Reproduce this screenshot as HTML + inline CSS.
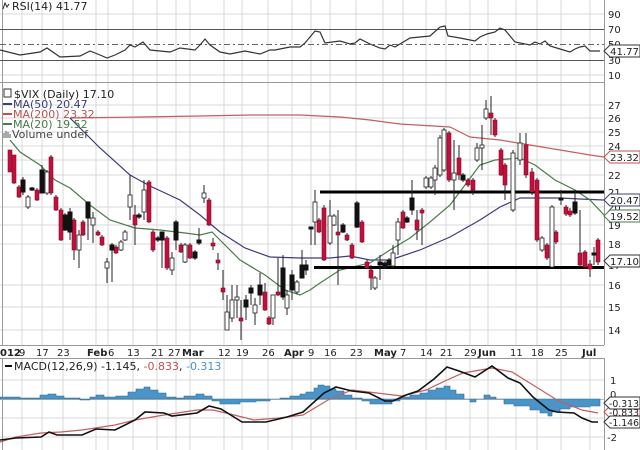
<!DOCTYPE html>
<html><head><meta charset="utf-8"><style>
html,body{margin:0;padding:0;background:#fff;width:640px;height:450px;overflow:hidden}
svg{display:block}
text{font-family:"DejaVu Sans","Liberation Sans",sans-serif;font-size:11px}
.ax{font-size:10px}
</style></head><body>
<svg width="640" height="450" viewBox="0 0 640 450" xmlns="http://www.w3.org/2000/svg">
<g stroke="#d9d9d9" stroke-width="1">
<path d="M22 0V345M42 0V345M63 0V345M96 0V345M108 0V345M133 0V345M157 0V345M176 0V345M190 0V345M224 0V345M242 0V345M268 0V345M292 0V345M311 0V345M330 0V345M356 0V345M383 0V345M403 0V345M426 0V345M446 0V345M470 0V345M488 0V345M516 0V345M537 0V345M561 0V345M590 0V345"/>
<path d="M22 358V450M42 358V450M63 358V450M96 358V450M108 358V450M133 358V450M157 358V450M176 358V450M190 358V450M224 358V450M242 358V450M268 358V450M292 358V450M311 358V450M330 358V450M356 358V450M383 358V450M403 358V450M426 358V450M446 358V450M470 358V450M488 358V450M516 358V450M537 358V450M561 358V450M590 358V450"/>
<path d="M0 14H604M0 75H604M0 105H604M0 118H604M0 132H604M0 146H604M0 160H604M0 175H604M0 207H604M0 225H604M0 244H604M0 285H604M0 307H604M0 330H604M0 380H604M0 418H604M0 437H604"/>
</g>
<g stroke="#999" fill="none">
<path d="M2.5 0V345M604.5 0V345M0 82.5H604M0 345.5H604M2.5 358V450M604.5 358V450M0 358.5H604"/>
</g>
<path d="M0 29.5H604M0 60.5H604" stroke="#555" stroke-width="1"/>
<path d="M0 44.5H604" stroke="#666" stroke-dasharray="6,3,2,3"/>
<polyline fill="none" stroke="#333" stroke-width="1.2" points="0,50 20,55 40,52 47,48 60,57 80,56 90,51 100,55 107,58 115,55 125,50 130,45 135,47 143,42 150,50 170,52 180,48 195,50 200,45 205,39 210,45 220,52 230,54 245,51 260,54 270,50 275,50 290,47 300,47 305,43 315,31 320,32 325,43 340,41 350,44 355,43 360,39 370,44 380,48 385,49 390,45 395,47 400,44 410,38 430,36 440,27 445,26 448,36 460,38 475,41 480,37 487,34 495,32 500,28 505,30 515,42 530,45 535,42 540,44 545,41 550,46 560,49 570,52 575,49 580,47 585,46 590,51 600,51"/>
<g fill="#222">
<text x="12" y="10">RSI(14) 41.77</text>
<g class="ax"><text x="608" y="18" class="ax">90</text><text x="608" y="33" class="ax">70</text><text x="608" y="48" class="ax">50</text><text x="608" y="64" class="ax">30</text><text x="608" y="79" class="ax">10</text></g>
</g>
<path d="M3 9l2-6 2 4 2-3" stroke="#222" fill="none"/>
<path d="M604 51l6-6h30v12h-30z" fill="#fff" stroke="#333"/><text x="610" y="55" fill="#222" class="ax" textLength="29" lengthAdjust="spacingAndGlyphs">41.77</text>
<g fill="#222">
<text class="ax" x="608" y="109">27</text><text class="ax" x="608" y="122">26</text><text class="ax" x="608" y="136">25</text><text class="ax" x="608" y="150">24</text><text class="ax" x="608" y="179">22</text><text class="ax" x="608" y="196">21</text><text class="ax" x="608" y="211">20</text><text class="ax" x="608" y="229">19</text><text class="ax" x="608" y="248">18</text><text class="ax" x="608" y="269">17</text><text class="ax" x="608" y="289">16</text><text class="ax" x="608" y="311">15</text><text class="ax" x="608" y="334">14</text>
</g>
<polyline fill="none" stroke="#c06060" stroke-width="1.2" points="70,118 140,117 200,116 250,115 300,115 340,117 370,120 400,124 450,127 470,137 500,140 530,145 560,150 590,155 604,157"/>
<polyline fill="none" stroke="#3c3c78" stroke-width="1.2" points="70,118 100,148 130,175 150,186 180,200 200,215 220,232 245,248 270,257 300,258 330,258 350,256 370,260 390,260 420,250 450,237 480,220 500,207 520,198 535,198 560,198 580,199 604,200"/>
<polyline fill="none" stroke="#4a7a4a" stroke-width="1.2" points="10,140 20,152 40,165 55,180 70,188 90,205 110,220 135,228 160,230 185,233 200,235 212,232 220,240 240,260 265,275 285,290 300,295 310,290 320,283 340,270 370,263 390,250 410,238 430,222 450,205 465,185 480,165 495,160 520,158 535,165 555,180 575,190 590,200 604,215"/>
<path d="M320 192H604M314 267.5H604" stroke="#000" stroke-width="3"/>
<g stroke="#222" stroke-width="1">
<path d="M10 150V172M14 155V184M19 185V198M23 177V195M28 195V209M32 187V191M37 188V201M42 165V193M47 170V195M51 155V195M56 195V211M61 208V241M65 213V231M70 208V240M74 218V260M79 230V268M83 220V236M88 203V240M93 212V243M98 230V236M102 235V246M107 258V283M112 243V282M116 245V254M121 240V251M125 230V241M130 175V220M135 205V245M139 213V219M144 180V220M149 180V223M153 230V252M158 236V242M162 233V268M167 236V270M172 252V275M176 220V250M181 243V253M185 243V263M190 243V259M195 250V260M199 228V245M204 185V203M209 198V226M213 238V250M218 253V270M223 270V300M227 295V330M232 285V322M237 285V318M241 300V340M246 295V320M251 285V305M255 298V325M260 273V305M265 283V311M269 316V325M273 295V325M278 258V296M283 255V300M287 290V315M292 270V300M297 280V294M302 250V278M306 260V275M311 227V245M315 190V245M319 218V233M324 205V261M330 200V245M334 214V226M338 210V285M343 223V233M347 233V241M352 243V259M357 201V228M362 220V243M367 260V269M371 265V290M375 276V290M380 255V280M385 261V269M389 258V266M393 245V268M398 218V255M403 210V229M407 216V223M412 180V215M417 210V240M422 208V245M426 176V189M431 176V189M435 165V195M440 135V177M444 128V172M449 131V182M454 140V210M459 145V180M463 173V182M468 178V187M473 178V195M477 143V162M482 125V170M486 100V120M491 96V135M495 118V137M501 148V176M505 163V200M513 150V212M520 133V165M526 133V178M532 168V195M537 178V242M542 236V252M547 243V260M552 205V268M556 230V244M561 190V205M566 205V216M570 208V217M575 190V215M580 210V267M585 250V269M590 260V277M594 247V265M598 238V265"/>
</g>
<g fill="#c0103c" stroke="#8a0a2a" stroke-width="0.6">
<rect x="8" y="150" width="4" height="22"/><rect x="12" y="155" width="4" height="28"/><rect x="17" y="187" width="4" height="10"/><rect x="35" y="190" width="4" height="10"/><rect x="49" y="157" width="4" height="36"/><rect x="54" y="197" width="4" height="13"/><rect x="59" y="210" width="4" height="30"/><rect x="72" y="220" width="4" height="30"/><rect x="81" y="222" width="4" height="13"/><rect x="96" y="232" width="4" height="3"/><rect x="100" y="237" width="4" height="8"/><rect x="114" y="247" width="4" height="6"/><rect x="133" y="215" width="4" height="10"/><rect x="147" y="182" width="4" height="40"/><rect x="151" y="232" width="4" height="18"/><rect x="165" y="238" width="4" height="30"/><rect x="179" y="245" width="4" height="7"/><rect x="188" y="245" width="4" height="13"/><rect x="207" y="200" width="4" height="25"/><rect x="211" y="243" width="4" height="3"/><rect x="216" y="260" width="4" height="3"/><rect x="221" y="288" width="4" height="4"/><rect x="239" y="318" width="4" height="3"/><rect x="263" y="292" width="4" height="18"/><rect x="267" y="318" width="4" height="6"/><rect x="276" y="292" width="4" height="3"/><rect x="317" y="220" width="4" height="12"/><rect x="322" y="208" width="4" height="52"/><rect x="336" y="232" width="4" height="3"/><rect x="345" y="235" width="4" height="5"/><rect x="350" y="245" width="4" height="13"/><rect x="360" y="222" width="4" height="20"/><rect x="365" y="262" width="4" height="6"/><rect x="369" y="270" width="4" height="8"/><rect x="401" y="212" width="4" height="16"/><rect x="415" y="220" width="4" height="10"/><rect x="420" y="210" width="4" height="3"/><rect x="447" y="133" width="4" height="47"/><rect x="457" y="158" width="4" height="17"/><rect x="466" y="180" width="4" height="5"/><rect x="471" y="180" width="4" height="10"/><rect x="489" y="113" width="4" height="5"/><rect x="493" y="120" width="4" height="15"/><rect x="499" y="150" width="4" height="25"/><rect x="503" y="165" width="4" height="20"/><rect x="524" y="145" width="4" height="30"/><rect x="530" y="172" width="4" height="20"/><rect x="535" y="180" width="4" height="60"/><rect x="545" y="245" width="4" height="13"/><rect x="554" y="232" width="4" height="10"/><rect x="564" y="207" width="4" height="7"/><rect x="568" y="211" width="4" height="4"/><rect x="578" y="253" width="4" height="12"/><rect x="583" y="252" width="4" height="15"/><rect x="588" y="264" width="4" height="5"/><rect x="596" y="240" width="4" height="22"/>
</g>
<g fill="#fff" stroke="#222" stroke-width="0.8">
<rect x="26" y="197" width="4" height="10"/><rect x="45" y="172" width="4" height="21"/><rect x="77" y="235" width="4" height="15"/><rect x="91" y="218" width="4" height="7"/><rect x="105" y="262" width="4" height="6"/><rect x="119" y="242" width="4" height="8"/><rect x="123" y="232" width="4" height="8"/><rect x="128" y="195" width="4" height="12"/><rect x="142" y="190" width="4" height="22"/><rect x="170" y="258" width="4" height="12"/><rect x="183" y="245" width="4" height="17"/><rect x="202" y="193" width="4" height="5"/><rect x="225" y="312" width="4" height="18"/><rect x="230" y="300" width="4" height="18"/><rect x="235" y="297" width="4" height="3"/><rect x="253" y="305" width="4" height="8"/><rect x="271" y="295" width="4" height="23"/><rect x="285" y="295" width="4" height="13"/><rect x="295" y="282" width="4" height="10"/><rect x="313" y="202" width="4" height="20"/><rect x="328" y="216" width="4" height="27"/><rect x="332" y="216" width="4" height="9"/><rect x="373" y="278" width="4" height="10"/><rect x="391" y="253" width="4" height="13"/><rect x="396" y="222" width="4" height="18"/><rect x="424" y="178" width="4" height="9"/><rect x="429" y="178" width="4" height="9"/><rect x="433" y="168" width="4" height="12"/><rect x="438" y="138" width="4" height="37"/><rect x="442" y="130" width="4" height="40"/><rect x="452" y="173" width="4" height="7"/><rect x="475" y="148" width="4" height="12"/><rect x="480" y="145" width="4" height="3"/><rect x="484" y="109" width="4" height="9"/><rect x="511" y="153" width="4" height="57"/><rect x="518" y="143" width="4" height="17"/><rect x="540" y="238" width="4" height="12"/><rect x="550" y="207" width="4" height="60"/>
</g>
<g fill="#111" stroke="#111">
<rect x="21" y="180" width="4" height="12"/><rect x="30" y="188" width="4" height="2"/><rect x="40" y="170" width="4" height="23"/><rect x="63" y="215" width="4" height="15"/><rect x="68" y="212" width="4" height="20"/><rect x="86" y="202" width="4" height="16"/><rect x="110" y="245" width="4" height="5"/><rect x="137" y="215" width="4" height="2"/><rect x="156" y="238" width="4" height="2"/><rect x="160" y="232" width="4" height="8"/><rect x="174" y="222" width="4" height="18"/><rect x="193" y="252" width="4" height="6"/><rect x="197" y="240" width="4" height="3"/><rect x="244" y="300" width="4" height="7"/><rect x="249" y="288" width="4" height="5"/><rect x="258" y="285" width="4" height="10"/><rect x="281" y="268" width="4" height="29"/><rect x="290" y="275" width="4" height="15"/><rect x="300" y="265" width="4" height="13"/><rect x="304" y="265" width="4" height="5"/><rect x="309" y="227" width="4" height="2"/><rect x="341" y="225" width="4" height="7"/><rect x="355" y="203" width="4" height="24"/><rect x="378" y="262" width="4" height="3"/><rect x="383" y="263" width="4" height="5"/><rect x="387" y="260" width="4" height="5"/><rect x="405" y="218" width="4" height="4"/><rect x="410" y="198" width="4" height="12"/><rect x="461" y="175" width="4" height="5"/><rect x="559" y="198" width="4" height="2"/><rect x="573" y="202" width="4" height="11"/><rect x="592" y="253" width="4" height="2"/>
</g>
<g stroke-width="1" fill="#fff">
<path d="M604 157l6-6h30v12h-30z" stroke="#c05050"/>
<path d="M604 200l6-6h30v12h-30z" stroke="#3c3c78"/>
<path d="M604 216l6-6h30v12h-30z" stroke="#4a7a4a"/>
<path d="M604 261l6-6h30v12h-30z" stroke="#333"/>
</g>
<g fill="#222" class="ax"><text class="ax" x="610" y="161" textLength="29" lengthAdjust="spacingAndGlyphs">23.32</text><text class="ax" x="610" y="204" textLength="29" lengthAdjust="spacingAndGlyphs">20.47</text><text class="ax" x="610" y="220" textLength="29" lengthAdjust="spacingAndGlyphs">19.52</text><text class="ax" x="610" y="265" textLength="29" lengthAdjust="spacingAndGlyphs">17.10</text></g>
<rect x="4" y="89" width="7" height="8" fill="none" stroke="#333"/>
<text x="14" y="98" fill="#222" font-size="12">$VIX (Daily) 17.10</text>
<path d="M3 104H12" stroke="#3c3c78" stroke-width="2"/><text x="13" y="108" fill="#3c3c78">MA(50) 20.47</text>
<path d="M3 114H12" stroke="#c05050" stroke-width="2"/><text x="13" y="118" fill="#c05050">MA(200) 23.32</text>
<path d="M3 124H12" stroke="#4a7a4a" stroke-width="2"/><text x="13" y="128" fill="#4a7a4a">MA(20) 19.52</text>
<path d="M4 138V133M6 138V131M8 138V132M10 138V134" stroke="#555"/><text x="12" y="138" fill="#444">Volume undef</text>
<g fill="#222">
<text class="ax" x="0" y="356" style="font-weight:bold">012</text><text class="ax" x="19" y="356">9</text><text class="ax" x="36" y="356">17</text><text class="ax" x="57" y="356">23</text>
<text class="ax" x="87" y="356" style="font-weight:bold">Feb</text><text class="ax" x="108" y="356">6</text><text class="ax" x="127" y="356">13</text><text class="ax" x="151" y="356">21</text><text class="ax" x="168" y="356">27</text><text class="ax" x="182" y="356" style="font-weight:bold">Mar</text>
<text class="ax" x="218" y="356">12</text><text class="ax" x="236" y="356">19</text><text class="ax" x="262" y="356">26</text><text class="ax" x="284" y="356" style="font-weight:bold">Apr</text><text class="ax" x="308" y="356">9</text><text class="ax" x="324" y="356">16</text><text class="ax" x="350" y="356">23</text>
<text class="ax" x="374" y="356" style="font-weight:bold">May</text><text class="ax" x="400" y="356">7</text><text class="ax" x="420" y="356">14</text><text class="ax" x="440" y="356">21</text><text class="ax" x="464" y="356">29</text><text class="ax" x="478" y="356" style="font-weight:bold">Jun</text>
<text class="ax" x="510" y="356">11</text><text class="ax" x="531" y="356">18</text><text class="ax" x="555" y="356">25</text><text class="ax" x="582" y="356" style="font-weight:bold">Jul</text>
</g>
<path d="M0 399.5H604" stroke="#bbb"/>
<polygon fill="#4a94c8" stroke="#2a6a98" stroke-width="0.6" points="0,399 0,397 20,397 20,398 40,398 40,395 48,395 48,394 56,394 56,396 64,396 64,398 80,398 80,400 90,400 90,397 96,397 96,395 104,395 104,397 116,397 116,396 128,396 128,392 136,392 136,389 144,389 144,387 150,387 150,390 158,390 158,393 166,393 166,397 176,397 176,398 184,398 184,396 196,396 196,394 204,394 204,396 212,396 212,401 220,401 220,404 240,404 240,402 256,402 256,401 270,401 270,399 280,399 280,398 290,398 290,396 300,396 300,394 306,394 306,392 314,392 314,388 318,388 318,385 324,385 324,386 330,386 330,389 336,389 336,391 344,391 344,395 352,395 352,398 362,398 362,401 370,401 370,404 392,404 392,401 400,401 400,397 410,397 410,395 420,395 420,393 428,393 428,390 436,390 436,388 444,388 444,386 450,386 450,390 456,390 456,394 464,394 464,399 470,399 470,402 476,402 476,399 484,399 484,395 490,395 490,397 496,397 496,399 504,399 504,404 514,404 514,406 530,406 530,410 540,410 540,413 548,413 548,416 552,416 552,412 560,412 560,409 570,409 570,407 590,407 590,406 600,406 600,399"/>
<polyline fill="none" stroke="#c06060" stroke-width="1.2" points="0,442 16,437 41,433 61,432 82,430 115,425 135,420 164,415 197,410 213,410 230,414 254,420 279,418 303,415 328,400 352,390 377,393 402,396 426,390 447,380 463,373 492,368 512,372 533,385 557,400 582,410 598,413"/>
<polyline fill="none" stroke="#111" stroke-width="1.6" points="0,440 16,438 41,437 49,432 57,435 82,435 96,429 115,430 135,420 145,412 164,413 172,416 197,413 209,406 221,409 242,422 266,422 287,417 303,412 324,393 336,387 352,391 369,393 385,401 393,401 406,395 418,391 434,379 447,367 459,371 475,377 492,366 508,378 520,383 533,397 549,410 557,412 574,413 582,418 592,422 598,422"/>
<path d="M5 366H12" stroke="#111" stroke-width="2"/>
<text x="14" y="370" fill="#222">MACD(12,26,9) -1.145, <tspan fill="#c05050">-0.833</tspan>, <tspan fill="#4a94c8">-0.313</tspan></text>
<g fill="#222"><text class="ax" x="610" y="384">1</text><text class="ax" x="610" y="398">0</text><text class="ax" x="607" y="441">-2</text></g>
<path d="M604 412l6-6h30v12h-30z" fill="#fff" stroke="#c05050"/><text class="ax" x="609" y="416" fill="#222" textLength="30" lengthAdjust="spacingAndGlyphs">-0.833</text>
<path d="M604 403l6-6h30v12h-30z" fill="#fff" stroke="#333"/><text class="ax" x="609" y="407" fill="#222" textLength="30" lengthAdjust="spacingAndGlyphs">-0.313</text>
<path d="M604 422l6-6h30v12h-30z" fill="#fff" stroke="#333"/><text class="ax" x="609" y="426" fill="#222" textLength="30" lengthAdjust="spacingAndGlyphs">-1.146</text>
</svg>
</body></html>
